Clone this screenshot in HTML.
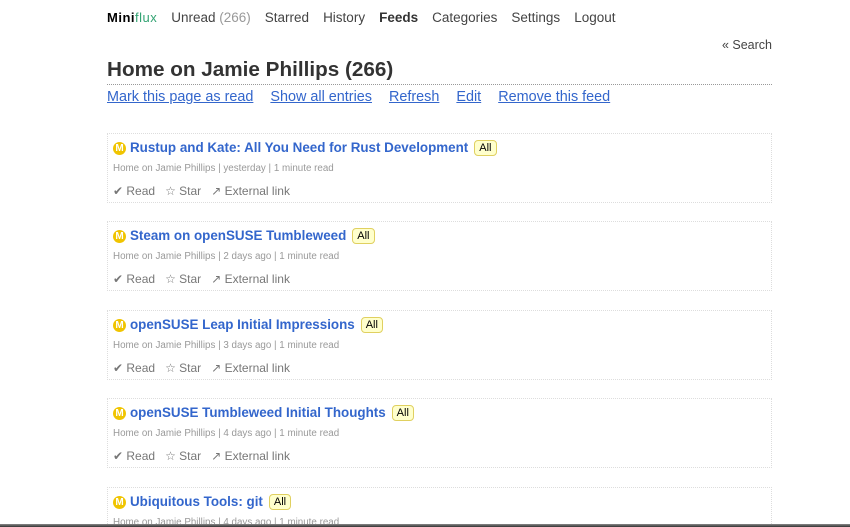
<!DOCTYPE html>
<html style="overflow:hidden;height:527px"><head><style>
body{margin:0;background:#fff;font-family:"Liberation Sans",sans-serif;width:850px;height:527px;overflow:hidden;position:relative}
.nav{position:absolute;top:10px;left:107px;font-size:13.5px;color:#444;white-space:nowrap}
.nav span{margin-right:14px}
.logo{font-weight:bold;letter-spacing:0.5px;color:#000;font-size:13px}
.logo b{color:#33a373;font-weight:normal}
.search{position:absolute;top:38px;right:78px;font-size:12.5px;color:#444}
h1{position:absolute;top:58px;left:107px;width:665px;margin:0;font-size:20.7px;color:#333;font-weight:bold;padding-bottom:2px;border-bottom:1px dotted #999;height:24px}
.links{position:absolute;top:89px;left:107px;font-size:14.4px;white-space:nowrap}
.links a{color:#3366cc;text-decoration:underline;margin-right:17px}
.card{position:absolute;left:107px;width:663px;height:68px;border:1px dotted #ddd}
.t{position:absolute;left:5px;top:6px;white-space:nowrap;font-size:13.4px;font-weight:bold;color:#3366cc}
.ic{display:inline-block;width:13px;height:13px;border-radius:50%;background:#f0c400;color:#fff;font-size:10px;text-align:center;line-height:13px;vertical-align:1px;margin-right:4px;font-weight:bold}
.tag{display:inline-block;font-size:11px;color:#000;background:#ffffcc;border:1px solid #e0d060;border-radius:4px;padding:1px 4px;margin-left:6px;font-weight:normal;vertical-align:1px}
.m{position:absolute;left:5px;top:29px;font-size:9.8px;color:#999}
.a{position:absolute;left:5px;top:50px;font-size:12px;color:#777;white-space:nowrap}
.a span{margin-right:10px}
.bar{position:absolute;left:0;right:0;top:524px;height:3px;background:linear-gradient(#888,#333)}
</style></head><body>
<div class="nav"><span class="logo">Mini<b>flux</b></span><span>Unread <span style="color:#999;margin:0">(266)</span></span><span>Starred</span><span>History</span><span style="font-weight:bold;color:#333">Feeds</span><span>Categories</span><span>Settings</span><span>Logout</span></div>
<div class="search">« Search</div>
<h1>Home on Jamie Phillips (266)</h1>
<div class="links"><a>Mark this page as read</a><a>Show all entries</a><a>Refresh</a><a>Edit</a><a>Remove this feed</a></div>

<div class="card" style="top:133px"><div class="t"><span class="ic">M</span>Rustup and Kate: All You Need for Rust Development<span class="tag">All</span></div><div class="m">Home on Jamie Phillips | yesterday | 1 minute read</div><div class="a"><span>✔ Read</span><span>☆ Star</span><span>↗ External link</span></div></div>
<div class="card" style="top:221px"><div class="t"><span class="ic">M</span>Steam on openSUSE Tumbleweed<span class="tag">All</span></div><div class="m">Home on Jamie Phillips | 2 days ago | 1 minute read</div><div class="a"><span>✔ Read</span><span>☆ Star</span><span>↗ External link</span></div></div>
<div class="card" style="top:310px"><div class="t"><span class="ic">M</span>openSUSE Leap Initial Impressions<span class="tag">All</span></div><div class="m">Home on Jamie Phillips | 3 days ago | 1 minute read</div><div class="a"><span>✔ Read</span><span>☆ Star</span><span>↗ External link</span></div></div>
<div class="card" style="top:398px"><div class="t"><span class="ic">M</span>openSUSE Tumbleweed Initial Thoughts<span class="tag">All</span></div><div class="m">Home on Jamie Phillips | 4 days ago | 1 minute read</div><div class="a"><span>✔ Read</span><span>☆ Star</span><span>↗ External link</span></div></div>
<div class="card" style="top:487px;height:36px;border-bottom:none"><div class="t"><span class="ic">M</span>Ubiquitous Tools: git<span class="tag">All</span></div><div class="m">Home on Jamie Phillips | 4 days ago | 1 minute read</div></div>
<div class="bar"></div>
</body></html>
